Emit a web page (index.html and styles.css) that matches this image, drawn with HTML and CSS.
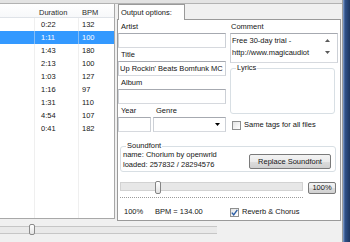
FILE: index.html
```html
<!DOCTYPE html>
<html>
<head>
    <meta charset="UTF-8">
    <title>Output options</title>
    <link rel="stylesheet" href="styles.css">
</head>
<body>
<div class="app">
    <div class="win">
        <div class="strip"></div>
        <div class="main">
            <div class="list">
                <div class="row head"><span></span><span>Duration</span><span>BPM</span></div>
                <div class="row"><span></span><span>0:22</span><span>132</span></div>
                <div class="row sel"><span></span><span>1:11</span><span>100</span></div>
                <div class="row"><span></span><span>1:43</span><span>180</span></div>
                <div class="row"><span></span><span>2:13</span><span>100</span></div>
                <div class="row"><span></span><span>1:03</span><span>127</span></div>
                <div class="row"><span></span><span>1:16</span><span>97</span></div>
                <div class="row"><span></span><span>1:31</span><span>110</span></div>
                <div class="row"><span></span><span>4:54</span><span>107</span></div>
                <div class="row"><span></span><span>0:41</span><span>182</span></div>
            </div>
            <div class="side">
                <div class="tab">Output options:</div>
                <div class="pane">
                    <div class="tags">
                        <div class="col">
                            <div class="lbl">Artist</div>
                            <input class="edit" type="text">
                            <div class="lbl">Title</div>
                            <input class="edit" type="text" value="Up Rockin' Beats Bomfunk MC">
                            <div class="lbl">Album</div>
                            <input class="edit" type="text">
                            <div class="pair">
                                <div class="lbl">Year</div>
                                <div class="lbl">Genre</div>
                            </div>
                            <div class="pair">
                                <input class="edit" type="text">
                                <div class="edit select">
                                    <svg width="5" height="3" viewBox="0 0 5 3"><polygon points="0,0 5,0 2.5,3" fill="#000"/></svg>
                                </div>
                            </div>
                        </div>
                        <div class="col">
                            <div class="lbl lbl2">Comment</div>
                            <div class="edit memo">
                                <div class="memo-text">Free 30-day trial -<br>http://www.magicaudiot</div>
                                <div class="scroll">
                                    <svg width="5" height="3" viewBox="0 0 5 3"><polygon points="0,3 5,3 2.5,0" fill="#5a5a5a"/></svg>
                                    <svg class="down" width="5" height="3" viewBox="0 0 5 3"><polygon points="0,0 5,0 2.5,3" fill="#5a5a5a"/></svg>
                                </div>
                            </div>
                            <fieldset class="group lyrics"><legend>Lyrics</legend></fieldset>
                            <div class="opt"><span class="check"></span>Same tags for all files</div>
                        </div>
                    </div>
                    <fieldset class="group font">
                        <legend>Soundfont</legend>
                        <div class="font-body">
                            <div class="font-info">name: Chorium by openwrld<br>loaded: 257832 / 28294576</div>
                            <button class="btn replace">Replace Soundfont</button>
                        </div>
                    </fieldset>
                    <div class="tempo">
                        <div class="slider">
                            <div class="track"><span class="thumb"></span></div>
                            <div class="ticks"></div>
                        </div>
                        <button class="btn pct">100%</button>
                    </div>
                    <div class="status">
                        <span>100%</span>
                        <span>BPM = 134.00</span>
                        <span class="opt opt2"><span class="check">
                            <svg width="7" height="7" viewBox="0 0 7 7"><path d="M0.8 3.6 L2.7 5.8 L6.3 0.8" fill="none" stroke="#2d5fa6" stroke-width="1.4"/></svg>
                        </span>Reverb &amp; Chorus</span>
                    </div>
                </div>
            </div>
        </div>
        <div class="foot"><div class="bar"><span class="knob"></span></div></div>
    </div>
    <div class="frame"></div>
</div>
</body>
</html>
```

FILE: styles.css
```css
*{margin:0;padding:0;box-sizing:border-box}
body{width:350px;height:242px;overflow:hidden;background:#f0f0f0;font:7.5px/13px "Liberation Sans",Arial,sans-serif;color:#151515}
.app{display:flex;height:242px}
.win{width:343px;border-right:1px solid #9c9c9c;display:flex;flex-direction:column}
.frame{flex:1;background:linear-gradient(to right,#8aa6d2,#30528a 2px,#1d3660)}
.strip{height:4px;background:#e3e3e3;border-bottom:1px solid #b2b2b2}
.main{display:flex;align-items:flex-start;height:217px}

/* track list */
.list{width:115px;height:215px;border-right:1px solid #a8a8a8;border-bottom:1px solid #a8a8a8;
  background:linear-gradient(to right,transparent 34px,#efefef 34px,#efefef 35px,transparent 35px),
             linear-gradient(to right,transparent 78px,#efefef 78px,#efefef 79px,transparent 79px),#fff}
.row{display:grid;grid-template-columns:34px 44px 1fr;height:13px;line-height:13px;white-space:nowrap}
.row span:nth-child(2){padding-left:7px}
.row span:nth-child(3){padding-left:4px}
.head{height:14px;line-height:10px;padding-top:4px;background:linear-gradient(#fff,#f7f8fa);border-bottom:1px solid #dfe3e8;color:#2b2b2b}
.head span:nth-child(2){padding-left:5px}
.sel{color:#fff;background:linear-gradient(to right,transparent 34px,#86bdf5 34px,#86bdf5 35px,transparent 35px),
             linear-gradient(to right,transparent 78px,#86bdf5 78px,#86bdf5 79px,transparent 79px),#3399ff}

/* tag editor */
.side{width:224px;margin-left:2px;display:flex;flex-direction:column}
.tab{position:relative;z-index:1;width:67px;height:16px;margin:0 0 -1px 1px;padding:1px 0 0 2px;line-height:13px;
  background:#fff;border:1px solid #9a9a9a;border-bottom:none}
.pane{height:202px;background:#fff;border:1px solid #9a9a9a}
.tags{display:grid;grid-template-columns:108px 108px;column-gap:4px}
.col{display:flex;flex-direction:column}
.lbl{line-height:13px;padding-left:3px}
.lbl2{padding-left:1px}
.edit{display:block;width:100%;height:15px;padding:0 1px;font:inherit;line-height:13px;color:#151515;background:#fff;
  border:1px solid;border-color:#a6a9b0 #ccd0d6 #d6d9de #ccd0d6;outline:none}
.pair{display:grid;grid-template-columns:33px 1fr;column-gap:2px}
.select{display:flex;justify-content:flex-end;align-items:center;padding-right:5px}
.memo{height:30px;display:flex}
.memo-text{flex:1;padding-top:1px;line-height:12px;white-space:nowrap;overflow:hidden}
.scroll{width:17px;display:flex;flex-direction:column;align-items:center;padding-top:5px}
.scroll svg{display:block}
.scroll .down{margin-top:9px}
.group{border:1px solid #d8dfe4;border-radius:3px;min-width:0}
.group legend{margin-left:5px;padding:0 1px;line-height:8px}
.lyrics{height:50px;margin:1px 3px 0 0}
.opt{display:flex;align-items:center;gap:3px;margin-top:5px;line-height:12px;padding-left:2px;white-space:nowrap}
.check{width:9px;height:9px;border:1px solid #8e8f8f;background:linear-gradient(135deg,#e4e4e4,#fff);display:flex;align-items:center;justify-content:center}
.font{margin:10px 4px 0 2px}
.font-body{display:flex;justify-content:space-between;align-items:flex-end;padding:0 4px 1px 2px;line-height:10px}
.font-info{white-space:nowrap}
.btn{font:inherit;color:#151515;border:1px solid #7a7a7a;border-radius:2px;
  background:linear-gradient(#f3f3f3,#ebebeb 50%,#dddddd 51%,#d0d0d0)}
.replace{width:82px;height:15px;margin-bottom:1px}
.tempo{display:flex;justify-content:space-between;margin:10px 4px 0 2px}
.slider{width:183px}
.track{height:9px;border:1px solid #d2d2d2;background:#e7e7e7;display:flex;align-items:flex-start}
.thumb{width:6px;height:13px;margin:-2px 0 0 34px;border:1px solid #858585;border-radius:2px;background:linear-gradient(#fff,#e2e2e2)}
.ticks{margin-top:6px;height:1px;border-top:1px dotted #9c9c9c}
.pct{width:28px;height:12px;line-height:10px}
.status{display:grid;grid-template-columns:31px 75px auto;margin-top:8px;padding-left:6px;line-height:12px;white-space:nowrap}
.opt2{margin-top:0;padding-left:0}

/* bottom trackbar */
.foot{flex:1}
.bar{width:217px;height:8px;margin-top:5px;border-top:1px solid #c6c6c6;border-bottom:1px solid #c6c6c6;background:#e9e9e9;display:flex;align-items:flex-start}
.knob{width:6px;height:11px;margin:-3px 0 0 29px;border:1px solid #8a8a8a;border-radius:2px;background:linear-gradient(#fff,#e4e4e4)}
```
